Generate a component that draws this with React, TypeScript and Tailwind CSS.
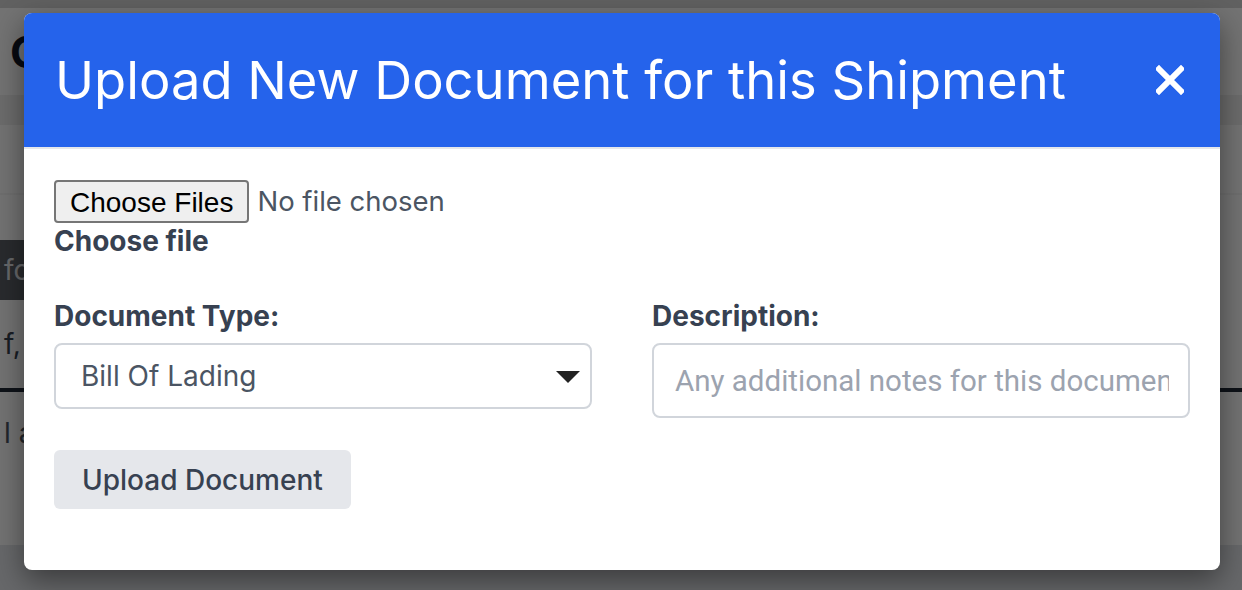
import { useState } from "react"

// Document types offered in the dropdown
const documentTypes = [
  "Bill Of Lading",
  "Commercial Invoice",
  "Packing List",
  "Certificate Of Origin",
  "Other",
]

function CloseIcon() {
  return (
    <svg width="28" height="30" viewBox="0 0 28 30" fill="none">
      <path d="M3 4L25 26M25 4L3 26" stroke="white" strokeWidth="6" strokeLinecap="square" />
    </svg>
  )
}

export default function App() {
  const [docType, setDocType] = useState(documentTypes[0])
  const [description, setDescription] = useState("")

  return (
    <div className="relative h-[590px] w-[1242px] overflow-hidden bg-white font-['Inter',sans-serif]">
      {/* Page behind the modal */}
      <div className="flex h-full flex-col">
        <div className="h-[8px] bg-[#d8d8d8]" />
        <div className="flex h-[87px] items-center px-[10px]">
          <h1 className="text-[44px] font-bold text-[#111827]">C</h1>
        </div>
        <div className="h-[30px] bg-[#f0f0f0]" />
        <div className="h-[68px]" />
        <div className="h-[2px] bg-[#f5f5f5]" />
        <div className="h-[45px]" />
        <div className="flex h-[60px] w-[200px] items-center bg-[#5c5f66] px-[4px] text-[28px] text-[#e5e7eb]">
          fo
        </div>
        <div className="flex h-[88px] items-center px-[4px] text-[28px] text-[#374151]">f,</div>
        <div className="h-[4px] bg-[#1f2937]" />
        <div className="flex h-[82px] items-center px-[4px] text-[28px] text-[#4b5563]">l a</div>
        <div className="flex-1" />
        <div className="h-[45px] bg-[#e5e7eb]" />
      </div>

      {/* Overlay */}
      <div className="absolute inset-0 bg-black/[0.55]" />

      {/* Modal */}
      <div className="absolute left-[24px] top-[13px] w-[1196px] overflow-hidden rounded-[8px] bg-white shadow-[0_10px_30px_rgba(0,0,0,0.45)]">
        <div className="flex h-[134px] items-center justify-between bg-[#2563eb] pl-[31px] pr-[36px]">
          <h2 className="text-[52.5px] font-normal leading-none text-white">
            Upload New Document for this Shipment
          </h2>
          <button className="flex h-[30px] w-[28px] items-center justify-center" aria-label="Close">
            <CloseIcon />
          </button>
        </div>
        <div className="h-[2px] bg-[#e5e7eb]" />

        <div className="px-[30px] pb-[61px] pt-[31px]">
          {/* File picker */}
          <div className="flex h-[43px] items-center">
            <button className="h-[43px] rounded-[4px] border-2 border-[#767676] bg-[#efefef] px-[14px] font-['Liberation_Sans',Arial,sans-serif] text-[28px] text-black">
              Choose Files
            </button>
            <span className="ml-[8px] text-[27.5px] text-[#4b5563]">No file chosen</span>
          </div>
          <label className="block text-[28px] font-bold leading-[36px] text-[#374151]">Choose file</label>

          <div className="mt-[39px] grid grid-cols-2 items-start gap-x-[60px]">
            <div>
              <label className="block text-[28px] font-bold leading-[36px] text-[#374151]">Document Type:</label>
              <div className="relative mt-[9px]">
                <select
                  value={docType}
                  onChange={(e) => setDocType(e.target.value)}
                  className="h-[66px] w-full appearance-none rounded-[8px] border-2 border-[#d1d5db] bg-white pl-[25px] text-[28px] text-[#4b5563] outline-none"
                >
                  {documentTypes.map((t) => (
                    <option key={t}>{t}</option>
                  ))}
                </select>
                <svg
                  className="pointer-events-none absolute right-[12px] top-[28px]"
                  width="24"
                  height="12"
                  viewBox="0 0 24 12"
                >
                  <path d="M0 0H24L12 12Z" fill="#222" />
                </svg>
              </div>
            </div>
            <div>
              <label className="block text-[28px] font-bold leading-[36px] text-[#374151]">Description:</label>
              <input
                value={description}
                onChange={(e) => setDescription(e.target.value)}
                placeholder="Any additional notes for this document"
                className="mt-[9px] h-[75px] w-full rounded-[8px] border-2 border-[#d1d5db] bg-white pl-[21px] pr-[19px] font-['Roboto',sans-serif] text-[29.5px] text-[#374151] outline-none placeholder:text-[#9ca3af]"
              />
            </div>
          </div>

          <button className="mt-[32px] h-[59px] rounded-[6px] bg-[#e5e7eb] px-[28px] text-[28px] font-medium text-[#374151]">
            Upload Document
          </button>
        </div>
      </div>
    </div>
  )
}
